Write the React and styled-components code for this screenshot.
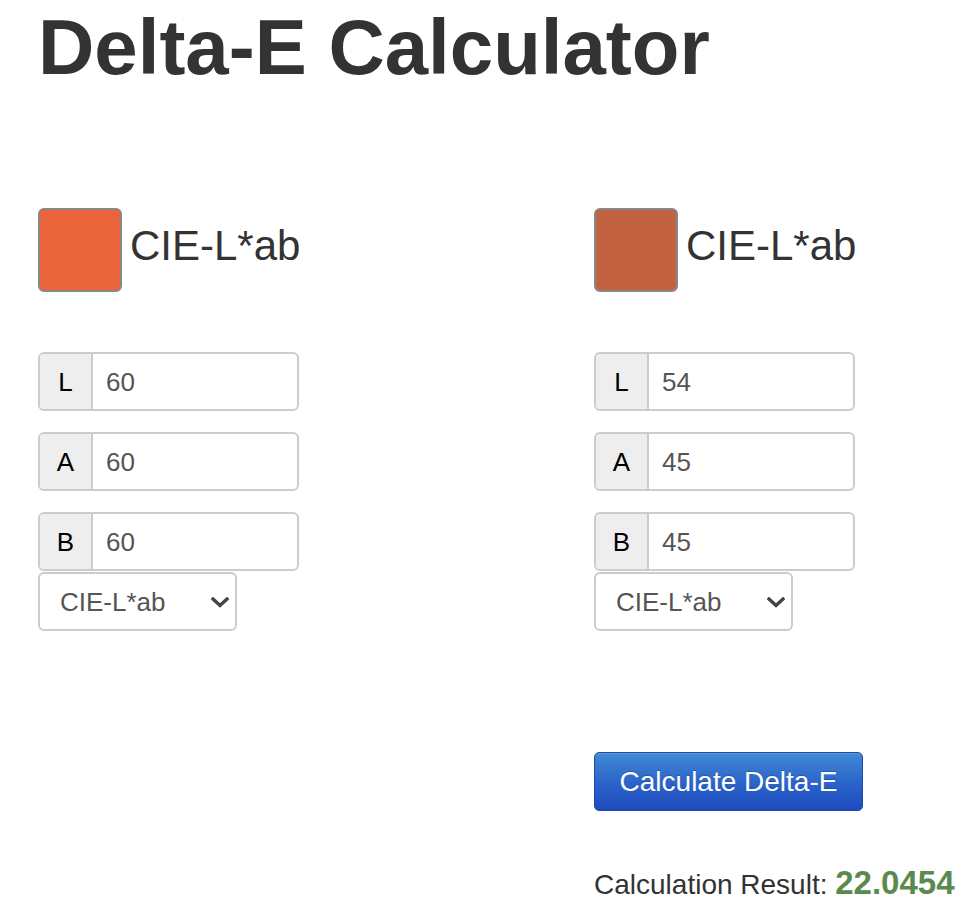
import React from "react";
import styled, { createGlobalStyle } from "styled-components";

const Global = createGlobalStyle`
  html, body { margin: 0; padding: 0; background: #fff; }
  body { font-family: "Liberation Sans", Arial, Helvetica, sans-serif; color: #333; }
  * { box-sizing: border-box; }
`;

const Page = styled.div`
  padding: 8px 0 0 38px;
  width: 980px;
`;

const Title = styled.h1`
  margin: 0;
  font-size: 78px;
  line-height: 78px;
  font-weight: 700;
  color: #333;
  letter-spacing: 0;
`;

const Grid = styled.div`
  display: grid;
  grid-template-columns: 556px 1fr;
  margin-top: 122px;
`;

const Column = styled.div`
  display: flex;
  flex-direction: column;
  align-items: flex-start;
`;

const Header = styled.div`
  display: flex;
  align-items: center;
  gap: 8px;
  height: 84px;
`;

const Swatch = styled.div`
  width: 84px;
  height: 84px;
  border: 2px solid #888;
  border-radius: 6px;
  background: ${(p) => p.$color};
`;

const SpaceName = styled.span`
  font-size: 42px;
  color: #333;
  padding-bottom: 8px;
`;

const Fields = styled.div`
  display: flex;
  flex-direction: column;
  gap: 21px;
  margin-top: 60px;
`;

const InputGroup = styled.div`
  display: flex;
  width: 261px;
  height: 59px;
  border: 2px solid #ccc;
  border-radius: 6px;
  overflow: hidden;
  background: #fff;
`;

const Addon = styled.span`
  flex: 0 0 53px;
  display: flex;
  align-items: center;
  justify-content: center;
  background: #eee;
  border-right: 2px solid #ccc;
  font-size: 26px;
  color: #000;
  padding-top: 1px;
`;

const Input = styled.input`
  flex: 1;
  min-width: 0;
  border: none;
  outline: none;
  padding: 1px 0 0 13px;
  font-family: "Liberation Sans", Arial, sans-serif;
  font-size: 26px;
  color: #555;
  background: transparent;
`;

const SelectWrap = styled.div`
  position: relative;
  width: 199px;
  height: 59px;
  margin-top: 1px;
`;

const Select = styled.select`
  appearance: none;
  -webkit-appearance: none;
  width: 100%;
  height: 100%;
  border: 2px solid #ccc;
  border-radius: 6px;
  background: #fff;
  padding: 1px 0 0 20px;
  font-family: "Liberation Sans", Arial, sans-serif;
  font-size: 26px;
  color: #555;
  outline: none;
`;

const Chevron = styled.svg`
  position: absolute;
  right: 8px;
  top: 25px;
  width: 18px;
  height: 11px;
  pointer-events: none;
`;

const Actions = styled.div`
  grid-column: 2;
  display: flex;
  flex-direction: column;
  align-items: flex-start;
  margin-top: 121px;
`;

const Button = styled.button`
  width: 269px;
  height: 59px;
  border: 1px solid #1d48a8;
  border-radius: 5px;
  background: linear-gradient(to bottom, #4189d6 0%, #2a62c9 55%, #1e4bbf 100%);
  color: #fff;
  font-family: "Liberation Sans", Arial, sans-serif;
  font-size: 28px;
  padding: 1px 0 0;
  text-shadow: 0 -1px 0 rgba(0, 0, 0, 0.2);
  box-shadow: inset 0 1px 0 rgba(255, 255, 255, 0.15);
  cursor: pointer;
`;

const Result = styled.div`
  margin-top: 55px;
  font-size: 28px;
  line-height: 1;
  color: #333;
`;

const ResultValue = styled.strong`
  font-size: 33px;
  line-height: 1;
  color: #5a8a4e;
  font-weight: 700;
`;

function ColorPanel({ color, values }) {
  return (
    <Column>
      <Header>
        <Swatch $color={color} />
        <SpaceName>CIE-L*ab</SpaceName>
      </Header>
      <Fields>
        {["L", "A", "B"].map((k, i) => (
          <InputGroup key={k}>
            <Addon>{k}</Addon>
            <Input defaultValue={values[i]} />
          </InputGroup>
        ))}
      </Fields>
      <SelectWrap>
        <Select defaultValue="lab">
          <option value="lab">CIE-L*ab</option>
        </Select>
        <Chevron viewBox="0 0 18 11">
          <path d="M2 2 L9 8.5 L16 2" fill="none" stroke="#444" strokeWidth="3.4" strokeLinecap="square" strokeLinejoin="miter" />
        </Chevron>
      </SelectWrap>
    </Column>
  );
}

export default function App() {
  return (
    <>
      <Global />
      <Page>
        <Title>Delta-E Calculator</Title>
        <Grid>
          <ColorPanel color="#e9643a" values={["60", "60", "60"]} />
          <ColorPanel color="#c26240" values={["54", "45", "45"]} />
          <Actions>
            <Button>Calculate Delta-E</Button>
            <Result>
              Calculation Result: <ResultValue>22.0454</ResultValue>
            </Result>
          </Actions>
        </Grid>
      </Page>
    </>
  );
}
